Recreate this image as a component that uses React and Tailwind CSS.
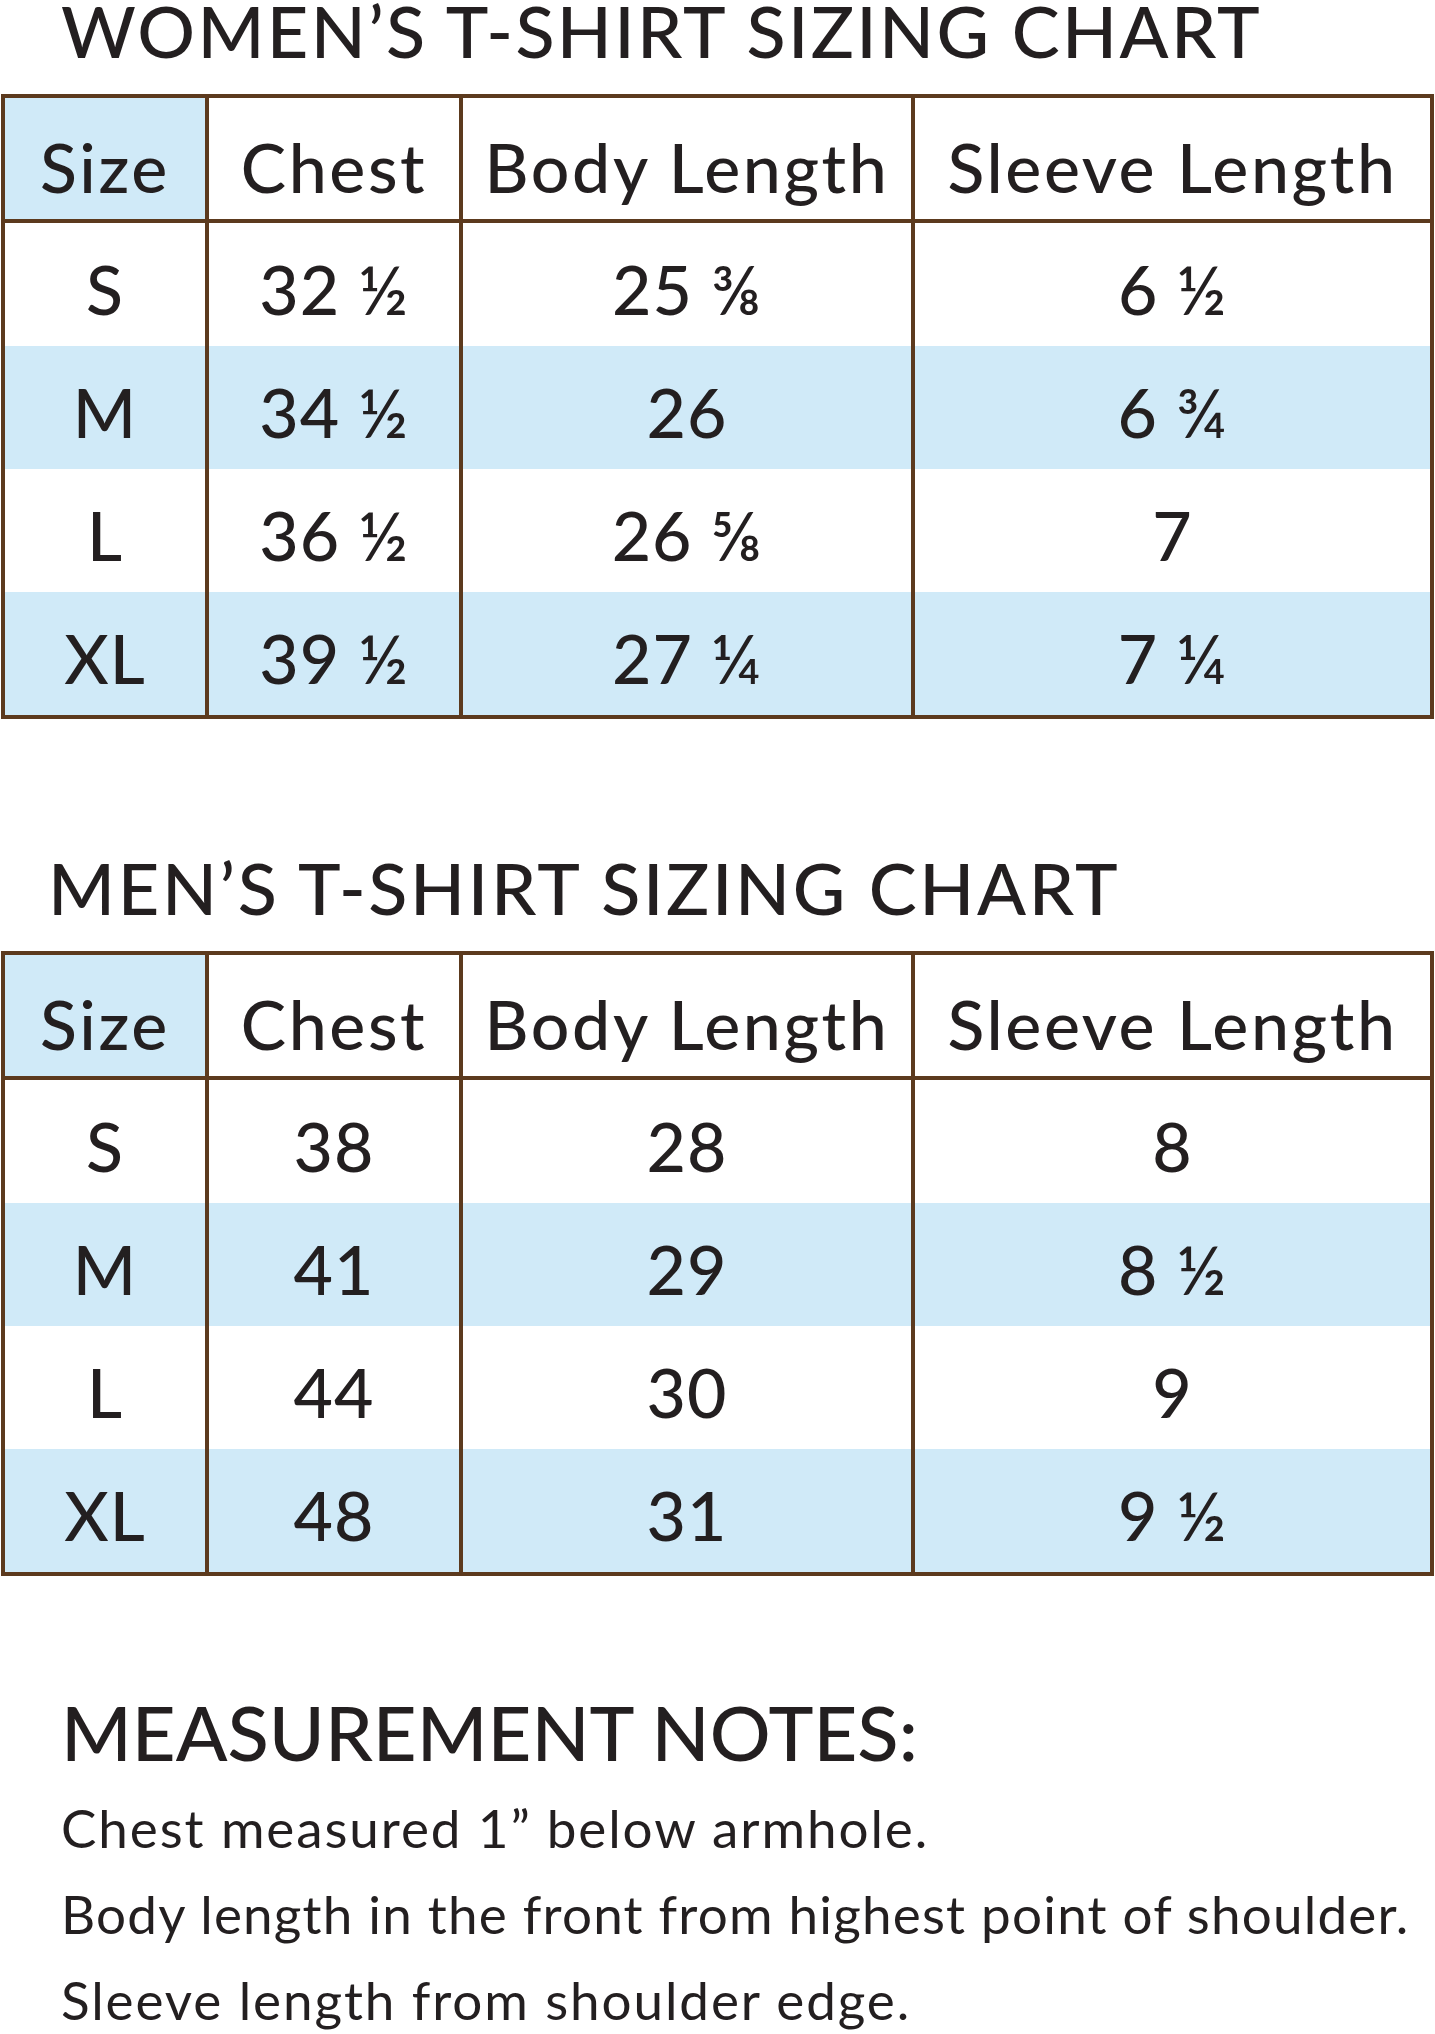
const WOMEN = [
  { size: 'S', chest: '32 ½', body: '25 ⅜', sleeve: '6 ½' },
  { size: 'M', chest: '34 ½', body: '26', sleeve: '6 ¾' },
  { size: 'L', chest: '36 ½', body: '26 ⅝', sleeve: '7' },
  { size: 'XL', chest: '39 ½', body: '27 ¼', sleeve: '7 ¼' },
]

const MEN = [
  { size: 'S', chest: '38', body: '28', sleeve: '8' },
  { size: 'M', chest: '41', body: '29', sleeve: '8 ½' },
  { size: 'L', chest: '44', body: '30', sleeve: '9' },
  { size: 'XL', chest: '48', body: '31', sleeve: '9 ½' },
]

const COLS = 'grid grid-cols-[200px_254px_452px_519px]'

function Cell({ children, first, blue }) {
  return (
    <div className={`flex items-center justify-center pt-2 tracking-[1px] ${first ? '' : 'border-l-4 border-[#5c3a1e]'} ${blue ? 'bg-[#d0eaf8]' : 'bg-white'}`}>
      {children}
    </div>
  )
}

function SizeTable({ rows }) {
  return (
    <div className="ml-px w-[1433px] border-4 border-[#5c3a1e] text-[68px] leading-none font-medium">
      {/* Header */}
      <div className={`${COLS} h-[125px] border-b-4 border-[#5c3a1e] tracking-[2.6px]`}>
        <div className="flex items-center justify-center pt-4 bg-[#d0eaf8]">Size</div>
        <div className="flex items-center justify-center pt-4 border-l-4 border-[#5c3a1e]">Chest</div>
        <div className="flex items-center justify-center pt-4 border-l-4 border-[#5c3a1e]">Body Length</div>
        <div className="flex items-center justify-center pt-4 border-l-4 border-[#5c3a1e]">Sleeve Length</div>
      </div>
      {rows.map((r, i) => {
        const blue = i % 2 === 1
        return (
          <div key={r.size} className={`${COLS} h-[123px]`}>
            <Cell first blue={blue}>{r.size}</Cell>
            <Cell blue={blue}>{r.chest}</Cell>
            <Cell blue={blue}>{r.body}</Cell>
            <Cell blue={blue}>{r.sleeve}</Cell>
          </div>
        )
      })}
    </div>
  )
}

export default function App() {
  return (
    <div className="w-[1435px] h-[2034px] overflow-hidden bg-white text-[#231f20] font-['Lato','Liberation_Sans',sans-serif]">
      <h1 className="ml-[61px] text-[72px] leading-[60px] font-medium tracking-[2.3px] whitespace-nowrap">WOMEN’S T-SHIRT SIZING CHART</h1>
      <div className="mt-[34px]">
        <SizeTable rows={WOMEN} />
      </div>

      <h1 className="mt-[138px] ml-[48px] text-[72px] leading-[60px] font-medium tracking-[2.6px] whitespace-nowrap">MEN’S T-SHIRT SIZING CHART</h1>
      <div className="mt-[34px]">
        <SizeTable rows={MEN} />
      </div>

      <h2 className="mt-[118px] ml-[61px] text-[76px] leading-none font-medium whitespace-nowrap">MEASUREMENT NOTES:</h2>
      <div className="mt-[15px] ml-[61px] text-[53px] leading-[86px] whitespace-nowrap">
        <p className="tracking-[1.9px]">Chest measured 1” below armhole.</p>
        <p className="tracking-[1.2px]">Body length in the front from highest point of shoulder.</p>
        <p className="tracking-[1.9px]">Sleeve length from shoulder edge.</p>
      </div>
    </div>
  )
}
